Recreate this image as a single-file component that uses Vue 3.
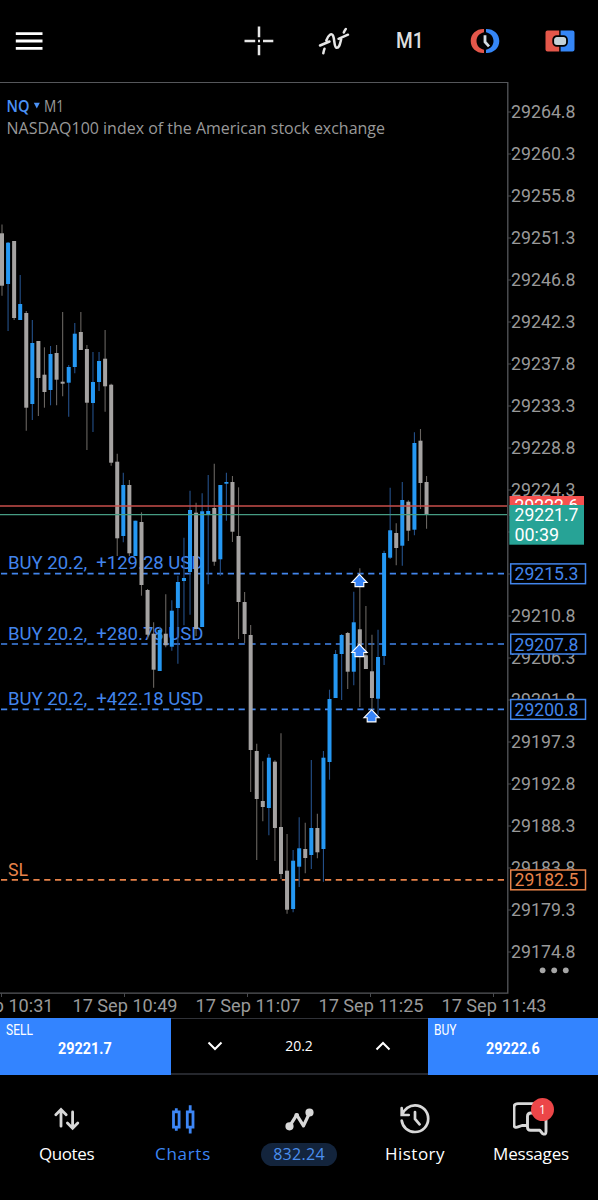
<template>
  <div class="screen">
    <header class="toolbar">
      <button class="tool" aria-label="Menu">
        <svg width="28" height="20" viewBox="0 0 28 20">
          <path d="M.8 2.7h26.7M.8 10h26.7M.8 17.3h26.7" stroke="#fff" stroke-width="2.8" />
        </svg>
      </button>
      <div class="tools">
        <button class="tool" aria-label="Crosshair">
          <svg width="30" height="30" viewBox="0 0 30 30">
            <path d="M15 .5v10.7M15 19v10.2M.5 15h10.7M19 15h10.3M14 15h2" stroke="#e6e6e6" stroke-width="2.5" />
          </svg>
        </button>
        <button class="tool" aria-label="Indicators">
          <svg width="32" height="28" viewBox="0 0 32 28" fill="none" stroke="#e6e6e6" stroke-width="2.5" stroke-linecap="round">
            <path d="M2 18.500l9.500-4M20.500 11.800L30 7.700M5.300 26.300c.3-1.800.6-3.200 1.200-4.600M8.300 13.500C10.500 7.500 13.600 5.500 15.200 9c1.500 3.500.8 11.300 3.300 11.700 3 .4 3.600-4.500 4.700-8.500M25.800 5.500c.6-1.500 1.200-2.500 2-3.500" />
          </svg>
        </button>
        <button class="tool timeframe"><span>M1</span></button>
        <button class="tool" aria-label="Pending order">
          <svg width="30" height="26" viewBox="0 0 30 26">
            <path d="M14 1C7 .6.7 5.500.7 13S7 25.400 14 25v-3.200C9.500 20.700 6.500 17.500 6.500 13S9.500 5.300 14 4.200z" fill="#e4574a" />
            <path d="M16 1c7-.4 13.300 4.500 13.300 12S23 25.400 16 25v-3.200c4.500-1.100 7.500-4.300 7.500-8.800S20.500 5.300 16 4.200z" fill="#3586f6" />
            <path d="M15 7.200v6.800l4 4.400" fill="none" stroke="#d4dce2" stroke-width="2.800" />
          </svg>
        </button>
        <button class="tool" aria-label="One click trading">
          <svg width="30" height="22" viewBox="0 0 30 22">
            <path d="M2.500.6h11.700v20.800H2.500a2 2 0 0 1-2-2V2.600a2 2 0 0 1 2-2z" fill="#e4574a" />
            <path d="M15.600.6h11.900a2 2 0 0 1 2 2v16.800a2 2 0 0 1-2 2H15.600z" fill="#3586f6" />
            <rect x="8.200" y="6.200" width="13.800" height="9.600" rx="3.600" fill="#c4d2d8" stroke="#000" stroke-width="1.800" />
          </svg>
        </button>
      </div>
    </header>

    <main class="chart">
      <svg width="598" height="936" viewBox="0 82 598 936">
        <path d="M0 82.300H507.800V993.200H0" class="frame" />

        <g class="axis">
          <template v-for="p in prices" :key="p.label">
            <line x1="508" x2="511" :y1="p.y" :y2="p.y" class="tick" />
            <text x="511" :y="p.y + 6.300" textLength="64.500" lengthAdjust="spacingAndGlyphs">{{ p.label }}</text>
          </template>
          <template v-for="t in times" :key="t.label">
            <line :x1="t.tick" :x2="t.tick" y1="993" y2="997" class="tick" />
            <text :x="t.x" y="1012.300" textLength="105" lengthAdjust="spacingAndGlyphs">{{ t.label }}</text>
          </template>
        </g>

        <text x="6.500" y="111.500" class="symbol" textLength="23" lengthAdjust="spacingAndGlyphs">NQ</text>
        <path d="M33.800 102.800h6l-3 5.800z" fill="#4b92f7" />
        <text x="44" y="111.500" class="caption" textLength="20" lengthAdjust="spacingAndGlyphs">M1</text>
        <text x="6.500" y="133.500" class="caption" textLength="378.500" lengthAdjust="spacingAndGlyphs">NASDAQ100 index of the American stock exchange</text>

        <template v-for="l in levels" :key="l.price">
          <line x1="1" x2="507" :y1="l.y" :y2="l.y" :stroke="l.color" class="level" />
          <text x="8" :y="l.y - 4.300" :fill="l.color" class="level-text" :textLength="l.width" lengthAdjust="spacingAndGlyphs">{{ l.text }}</text>
        </template>

        <g v-for="(c, i) in candles" :key="i" :class="c[4] ? 'up' : 'down'">
          <line :x1="candleX(i)" :x2="candleX(i)" :y1="c[0]" :y2="c[3]" />
          <rect :x="candleX(i) - 2" :y="c[1]" width="4" :height="c[2] - c[1]" />
        </g>

        <line x1="0" x2="507" y1="506" y2="506" stroke="#c94f4b" stroke-width="1.300" />
        <line x1="0" x2="507" y1="514.600" y2="514.600" stroke="#469c83" stroke-width="1.300" />

        <path
          v-for="(a, i) in arrows"
          :key="'a' + i"
          :transform="`translate(${a[0]} ${a[1]})`"
          d="M0-6.200L7.700 1.900H4.400V6H-4.400V1.900H-7.700z"
          class="arrow"
        />

        <g class="tags">
          <rect x="509.500" y="496" width="74.500" height="20" fill="#f6514f" />
          <text x="514.500" y="512.300" fill="#fff" textLength="64" lengthAdjust="spacingAndGlyphs">29222.6</text>
          <rect x="509.300" y="505" width="74.700" height="39.700" fill="#27a396" />
          <text x="514.500" y="521.300" fill="#fff" textLength="64" lengthAdjust="spacingAndGlyphs">29221.7</text>
          <text x="514.500" y="541.300" fill="#fff" textLength="44.500" lengthAdjust="spacingAndGlyphs">00:39</text>
          <template v-for="l in levels" :key="'t' + l.price">
            <rect x="510.700" :y="l.y - 9.800" width="74.800" height="19.800" fill="#000" :stroke="l.color" stroke-width="1.500" />
            <text x="514.500" :y="l.y + 6.600" :fill="l.color" textLength="64" lengthAdjust="spacingAndGlyphs">{{ l.price }}</text>
          </template>
        </g>

        <g fill="#a6a6a6">
          <circle cx="542.600" cy="970.300" r="2.900" />
          <circle cx="554.200" cy="970.300" r="2.900" />
          <circle cx="565.800" cy="970.300" r="2.900" />
        </g>
      </svg>
    </main>

    <section class="trade">
      <button class="order">
        <span class="side">SELL</span>
        <span class="quote">29221.7</span>
      </button>
      <div class="volume">
        <svg width="16" height="10" viewBox="0 0 16 10" class="chevron"><path d="M1.500 1.500L8 8l6.500-6.500" /></svg>
        <span class="lots">20.2</span>
        <svg width="16" height="10" viewBox="0 0 16 10" class="chevron"><path d="M1.500 8.500L8 2l6.500 6.500" /></svg>
      </div>
      <button class="order">
        <span class="side">BUY</span>
        <span class="quote">29222.6</span>
      </button>
    </section>

    <nav class="tabs">
      <a class="tab">
        <svg width="36" height="36" viewBox="0 0 36 36" class="icon">
          <path d="M12 26.200V10.500M6.800 14.800L12 9.500l5.200 5.300M23.600 12v14.500M18.400 23l5.200 5.200 5.200-5.200" />
        </svg>
        <span class="name quotes">Quotes</span>
      </a>
      <a class="tab active">
        <svg width="36" height="36" viewBox="0 0 36 36" class="icon candles">
          <path d="M8.500 11.800h5.600v15.400H8.500zM11.300 8.200v3.600M11.300 27.200v3.500M22.300 11.800h5.700v15.400h-5.700zM25.200 5.200v6.600M25.200 27.200v6.200" />
        </svg>
        <span class="name charts">Charts</span>
      </a>
      <a class="tab">
        <svg width="36" height="36" viewBox="0 0 36 36" class="icon">
          <path d="M8.500 26.300l7.200-11.500 6.800 11L28.500 13" stroke-linejoin="round" stroke-width="3.200" />
          <circle cx="8.500" cy="26.300" r="2.700" fill="#d8d8d8" />
          <circle cx="28.500" cy="12.500" r="2.700" fill="#d8d8d8" />
          <circle cx="15.700" cy="15.300" r="1" fill="#d8d8d8" />
        </svg>
        <span class="profit">832.24</span>
      </a>
      <a class="tab">
        <svg width="36" height="36" viewBox="0 0 36 36" class="icon">
          <path d="M5.500 14.300C7.300 9 12.300 5.400 18 5.400c7.500 0 13.200 6 13.200 13.300S25.500 32 18 32C11 32 5.500 27 4.700 20.500M4.700 8.200v6.800h7M18 12v7l4.600 5.300" stroke-width="2.700" />
        </svg>
        <span class="name history">History</span>
      </a>
      <a class="tab">
        <svg width="36" height="36" viewBox="0 0 36 36" class="icon">
          <path d="M13.500 25.500H9l-3.300 1.200q-4.700 2-4.700-2V7.500Q1 3.600 5 3.600h19q4 0 4 4V11M18 13h11.500q3.500 0 3.500 3.500v15q0 4-3.500 2l-2.700-3.200H17.500q-3 0-3-3v-11q0-3.300 3.500-3.300z" stroke-width="2.900" stroke-linejoin="round" />
        </svg>
        <span class="badge">1</span>
        <span class="name messages">Messages</span>
      </a>
    </nav>
  </div>
</template>

<script setup>
import { computed } from 'vue'

const BLUE = '#4285ec'
const ORANGE = '#e8834a'

const prices = computed(() =>
  Array.from({ length: 21 }, (_, i) => ({
    label: (29264.8 - i * 4.5).toFixed(1),
    y: 112 + i * 42
  }))
)

const times = [
  { label: '17 Sep 10:31', x: -51.5, tick: 1.5 },
  { label: '17 Sep 10:49', x: 72.5, tick: 124.5 },
  { label: '17 Sep 11:07', x: 195.5, tick: 247.5 },
  { label: '17 Sep 11:25', x: 318.5, tick: 370.5 },
  { label: '17 Sep 11:43', x: 441.5, tick: 493.5 }
]

const levels = [
  { text: 'BUY 20.2,  +129.28 USD', price: '29215.3', y: 573.7, width: 195.5, color: BLUE },
  { text: 'BUY 20.2,  +280.78 USD', price: '29207.8', y: 644, width: 195.5, color: BLUE },
  { text: 'BUY 20.2,  +422.18 USD', price: '29200.8', y: 709.3, width: 195.5, color: BLUE },
  { text: 'SL', price: '29182.5', y: 879.8, width: 20, color: ORANGE }
]

const arrows = [[359.4, 580.6], [359.4, 650.6], [371.6, 715.9]]

// high, body top, body bottom, low, rising
const candles = [
  [224.5, 233.3, 285.7, 295.7, 0],
  [242, 242.7, 284, 331, 1],
  [241, 241, 318, 320, 0],
  [275, 304, 320, 320, 1],
  [311, 313, 407.7, 430.7, 0],
  [320, 343, 404, 420, 1],
  [341, 341, 378, 416, 0],
  [347.3, 374.7, 392, 407.7, 0],
  [346, 354, 390, 405.3, 1],
  [345, 353, 379.7, 405.3, 0],
  [312, 381.7, 383.7, 396.3, 0],
  [365, 367, 382.7, 416.7, 1],
  [323, 333.7, 367, 373.3, 1],
  [312, 332, 350, 350, 0],
  [345, 349, 402.7, 450, 0],
  [352, 382, 403, 432, 1],
  [352, 361, 382, 391, 1],
  [330, 358.7, 386.3, 411.7, 0],
  [383.7, 384.7, 462.7, 465.7, 0],
  [453.7, 461.7, 538.3, 556, 0],
  [472.7, 485, 536, 542.3, 1],
  [480, 485, 553.3, 556, 0],
  [520.7, 520.7, 556, 556, 1],
  [512.3, 522, 585, 595.7, 0],
  [589, 590, 634.7, 639, 0],
  [622.3, 633.7, 669.7, 687.7, 0],
  [626.7, 630, 671, 671, 1],
  [594.3, 633.7, 645.3, 647.3, 0],
  [600.3, 610.7, 646.7, 650.7, 1],
  [575.7, 582, 608, 663.7, 1],
  [537.7, 578, 581, 625.3, 1],
  [490.7, 510, 572, 614.7, 1],
  [502.7, 512.7, 629, 636, 0],
  [493.3, 511.3, 627, 627, 1],
  [475, 511, 515, 584.3, 1],
  [463.7, 508, 561.7, 565.7, 0],
  [485, 485, 559.3, 575.7, 1],
  [472.7, 482, 483.7, 520.7, 1],
  [476, 482, 531.7, 542, 0],
  [487.3, 536, 602, 639, 0],
  [592, 602, 634, 643, 0],
  [625, 635, 750, 792, 0],
  [743.7, 751, 799, 860, 0],
  [761.3, 801, 807, 821.3, 0],
  [754, 757.7, 808, 835.3, 1],
  [760.3, 761.7, 828, 861, 0],
  [733.3, 827, 874, 879, 0],
  [834, 870.7, 909.7, 913.7, 0],
  [850, 860.7, 909, 912.3, 1],
  [817.3, 848.3, 866.7, 887, 1],
  [822.7, 849, 858, 873.3, 0],
  [760, 828, 855, 869, 1],
  [813.7, 828, 852.3, 858.3, 0],
  [751, 757.7, 849, 881.7, 1],
  [689.7, 699, 762, 779.7, 1],
  [650, 654, 698, 698, 1],
  [634, 635, 654, 700, 1],
  [632, 633, 671.7, 689, 0],
  [591.7, 622.3, 671.7, 685.3, 1],
  [568.3, 629.3, 652, 707, 0],
  [606, 655.3, 669, 669, 0],
  [634.7, 671.3, 698, 710, 0],
  [629.7, 657, 698.7, 714.7, 1],
  [550.7, 553, 656, 665, 1],
  [487.7, 530.3, 557.7, 559, 1],
  [523.3, 533, 548, 565.3, 0],
  [482, 500, 545.7, 565.7, 1],
  [500.3, 501.7, 530.7, 541, 0],
  [432.3, 443, 529.7, 535.3, 1],
  [429, 440.7, 483, 509, 0],
  [476, 482, 515, 528.7, 0]
]

const candleX = (i) => 2 + i * 6.065
</script>

<style>
body {
  background: #000;
}
</style>

<style scoped>
.screen {
  width: 598px;
  height: 1200px;
  display: flex;
  flex-direction: column;
  overflow: hidden;
  background: #000;
  color: #fff;
  font-family: Roboto, sans-serif;
}

button {
  padding: 0;
  border: none;
  background: none;
  color: inherit;
  font-family: inherit;
}

svg {
  display: block;
}

.toolbar {
  flex: none;
  height: 82px;
  box-sizing: border-box;
  display: flex;
  align-items: center;
  justify-content: space-between;
  padding: 0 0 1px 15px;
}

.tools {
  display: flex;
  align-items: center;
}

.tools .tool {
  width: 75.3px;
  display: flex;
  justify-content: center;
}

.timeframe {
  font-size: 22px;
  font-weight: 500;
  line-height: 30px;
  color: #dedede;
}

.timeframe span {
  transform: scaleX(0.87);
}

.chart {
  flex: none;
  height: 936px;
}

.chart text {
  white-space: pre;
}

.frame {
  fill: none;
  stroke: #55575b;
  stroke-width: 1.3;
}

.tick {
  stroke: #484a4e;
  stroke-width: 1;
}

.axis text {
  font-size: 18.500px;
  fill: #999;
}

.symbol {
  font: 600 17px 'Open Sans', sans-serif;
  fill: #4b92f7;
}

.caption {
  font: 400 16.500px 'Open Sans', sans-serif;
  fill: #999;
}

.level {
  stroke-width: 1.7;
  stroke-dasharray: 6.2 4.6;
}

.level-text {
  font-size: 18px;
}

.up line {
  stroke: #24508a;
  stroke-width: 1.1;
}

.up rect {
  fill: #2598f3;
}

.down line {
  stroke: #686460;
  stroke-width: 1.1;
}

.down rect {
  fill: #a5a3a2;
}

.arrow {
  fill: #3784f7;
  stroke: #fff;
  stroke-width: 1.1;
}

.tags text {
  font-size: 18.500px;
}

.trade {
  flex: none;
  height: 57px;
  display: grid;
  grid-template-columns: 170.500px 257px 1fr;
  margin-top: -0.500px;
}

.order {
  display: flex;
  flex-direction: column;
  background: #3384ff;
  color: #fff;
}

.side {
  align-self: flex-start;
  margin: 4px 0 0 6px;
  font: 400 14px/16px Roboto, sans-serif;
  transform: scaleX(0.86);
  transform-origin: left;
}

.quote {
  align-self: center;
  margin-top: 2px;
  font: 700 16px/18px Roboto, sans-serif;
  transform: scaleX(0.9);
}

.volume {
  box-sizing: border-box;
  border-top: 1px solid #303238;
  border-bottom: 2px solid #25272d;
  display: flex;
  align-items: center;
  justify-content: space-between;
  padding: 0 36px;
}

.chevron {
  fill: none;
  stroke: #fff;
  stroke-width: 2;
}

.lots {
  font: 400 14px 'Open Sans', sans-serif;
}

.tabs {
  flex: 1;
  display: grid;
  grid-template-columns: 125px 108px 124px 108px 124px;
  padding: 25px 5px 0 4px;
}

.tab {
  position: relative;
  display: flex;
  flex-direction: column;
  align-items: center;
}

.icon {
  fill: none;
  stroke: #d8d8d8;
  stroke-width: 2.8;
  stroke-linecap: round;
}

.candles {
  stroke: #3d86f5;
  stroke-linecap: butt;
}

.name {
  margin-top: 7px;
  font: 400 17px/22px 'Open Sans', sans-serif;
}

.quotes {
  letter-spacing: -0.4px;
}

.charts {
  letter-spacing: 0.7px;
  color: #3d86f5;
}

.history {
  letter-spacing: 0.5px;
}

.messages {
  letter-spacing: -0.2px;
}

.profit {
  margin-top: 7px;
  width: 76px;
  border-radius: 12px;
  background: #13243c;
  color: #4b8fee;
  font: 400 16px/23px 'Open Sans', sans-serif;
  letter-spacing: 0.3px;
  text-align: center;
}

.badge {
  position: absolute;
  top: -2px;
  left: 62px;
  width: 23px;
  height: 23px;
  border-radius: 50%;
  background: #ec4648;
  font: 400 12px/23px 'Open Sans', sans-serif;
  text-align: center;
}
</style>
